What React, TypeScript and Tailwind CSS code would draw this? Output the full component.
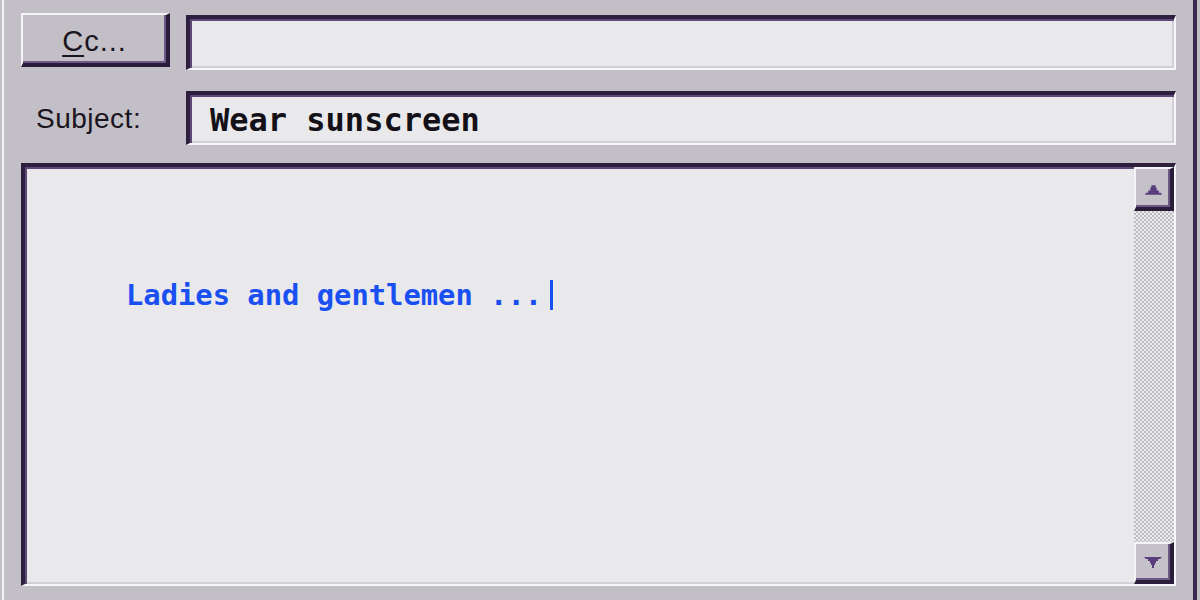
export default function App() {
  const field =
    "border-t-[4px] border-l-[4px] border-t-[#2d1f3d] border-l-[#2d1f3d] border-b-[2px] border-r-[2px] border-b-[#f6f6f8] border-r-[#f6f6f8] bg-[#e9e9eb] shadow-[inset_2px_2px_0_#5d4878,inset_-2px_-2px_0_#d2d0d6]";
  const sbBtn =
    "border-t-[2px] border-l-[2px] border-t-[#f4f4f6] border-l-[#f4f4f6] border-b-[4px] border-r-[4px] border-b-[#2a1d3a] border-r-[#2a1d3a] bg-[#c4c1c8] shadow-[inset_-2px_-2px_0_#6b5884] flex items-center justify-center";
  return (
    <div
      className="w-[1200px] h-[600px] overflow-hidden bg-[#c2bfc6] pl-[2px] pr-[3px]"
      style={{ fontFamily: '"Liberation Sans", Arial, sans-serif' }}
    >
      <div className="h-full border-l-[2px] border-l-[#f3f3f5] border-r-[4px] border-r-[#3a2a4d] pl-[17px] pr-[17px] flex flex-col">
        {/* Cc row */}
        <div className="flex items-start pt-[13px] gap-[16px]">
          <button className="w-[149px] h-[54px] shrink-0 border-t-[2px] border-l-[2px] border-t-[#f6f6f8] border-l-[#f6f6f8] border-b-[4px] border-r-[4px] border-b-[#2a1d3a] border-r-[#2a1d3a] bg-[#c2bfc6] shadow-[inset_-2px_-2px_0_#6e5a87] text-[29px] leading-none text-[#1a1420] flex items-center justify-center pt-[4px] tracking-[1px]">
            <span>
              <span className="underline decoration-[2px] underline-offset-[4px]">C</span>c...
            </span>
          </button>
          <div className={"mt-[2px] h-[55px] flex-1 " + field} />
        </div>

        {/* Subject row */}
        <div className="flex items-center mt-[21px]">
          <div className="w-[165px] shrink-0 pl-[15px] text-[28px] leading-none text-[#1a1420] pt-[2px] tracking-[0.5px]">
            Subject:
          </div>
          <div
            className={"h-[54px] flex-1 flex items-center pl-[20px] " + field}
            style={{ fontFamily: '"DejaVu Sans Mono", "Liberation Mono", monospace' }}
          >
            <span className="text-[32px] font-bold leading-none text-[#141018] pt-[2px]">
              Wear sunscreen
            </span>
          </div>
        </div>

        {/* Body */}
        <div className={"mt-[18px] h-[423px] flex " + field}>
          <div
            className="flex-1 pl-[101px] pt-[110px]"
            style={{ fontFamily: '"DejaVu Sans Mono", "Liberation Mono", monospace' }}
          >
            <div className="flex items-center h-[36px] text-[28.8px] font-bold text-[#1a4ff2] leading-none">
              <span>Ladies and gentlemen ...</span>
              <span className="inline-block w-[3px] h-[30px] bg-[#1a4ff2] ml-[8px]" />
            </div>
          </div>
          <div className="w-[40px] flex flex-col">
            <div className={"h-[44px] " + sbBtn}>
              <svg width="17" height="11" viewBox="0 0 16 10" className="mt-[2px]">
                <path d="M0 10 L1 8 L3 8 L3 6 L5 6 L5 3 L6 3 L6 1 L10 1 L10 3 L11 3 L11 6 L13 6 L13 8 L15 8 L16 10 Z" fill="#5a3d7c" />
              </svg>
            </div>
            <div className="flex-1 bg-[repeating-conic-gradient(#bdbac2_0_25%,#ecebef_0_50%)] bg-[length:4px_4px]" />
            <div className={"h-[42px] " + sbBtn}>
              <svg width="18" height="11" viewBox="0 0 18 11">
                <path d="M0 0 L18 0 L16 2 L14 2 L14 4 L12 4 L12 6 L11 6 L11 8 L10 8 L10 11 L8 11 L8 8 L7 8 L7 6 L6 6 L6 4 L4 4 L4 2 L2 2 Z" fill="#5a3d7c" />
              </svg>
            </div>
          </div>
        </div>
      </div>
    </div>
  );
}
